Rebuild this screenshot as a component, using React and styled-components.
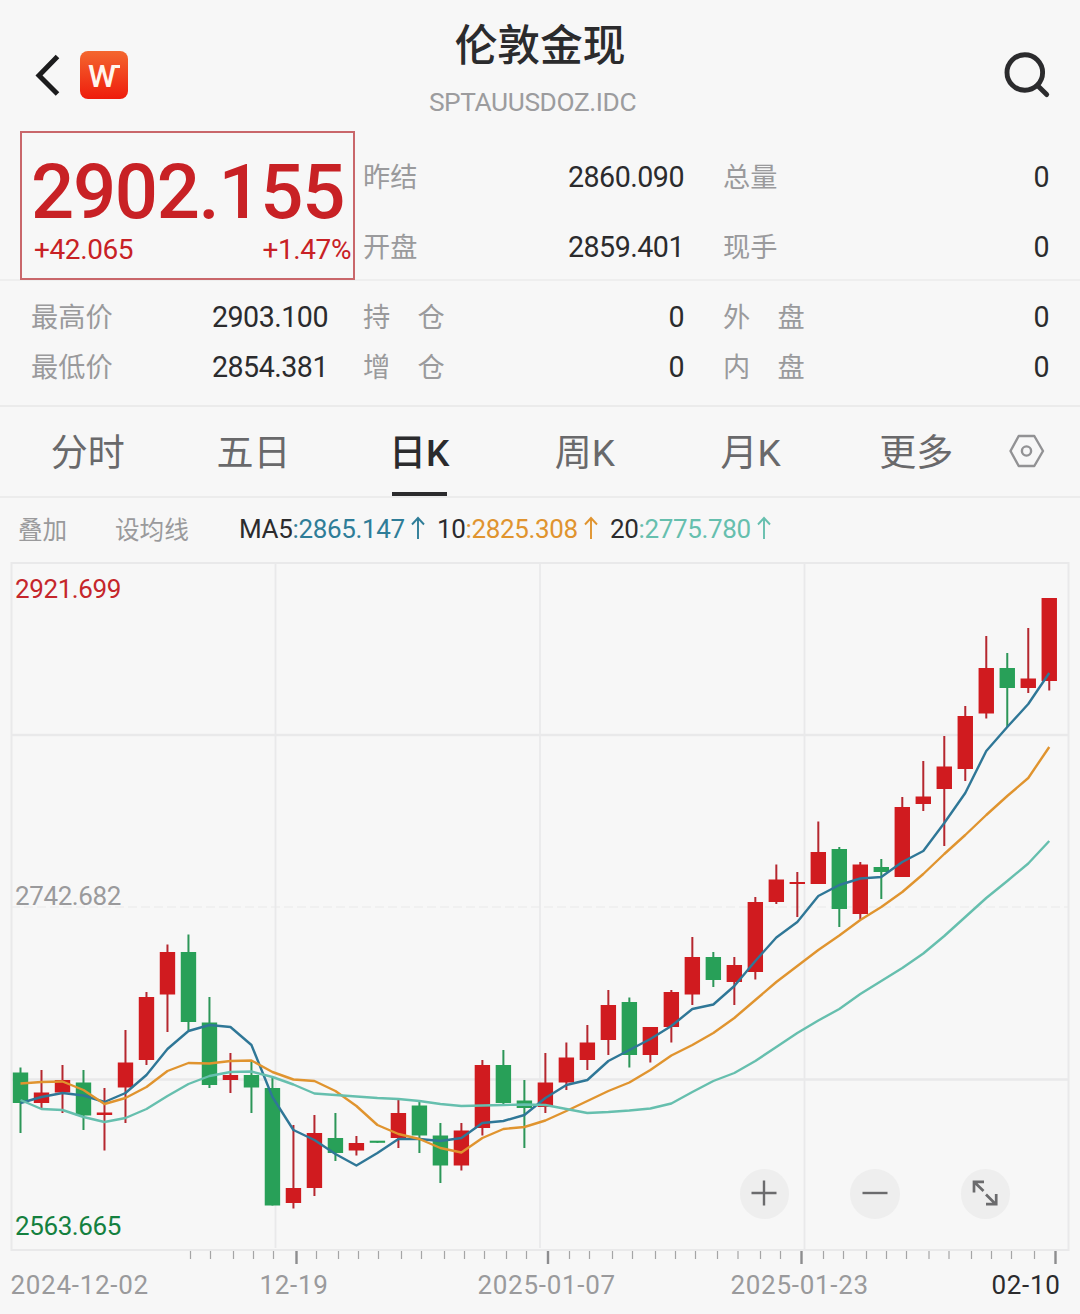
import React from 'react';
import styled, { createGlobalStyle } from 'styled-components';

const GlobalStyle = createGlobalStyle`
  * {
    box-sizing: border-box;
  }
  body {
    margin: 0;
    background: #f7f7f7;
  }
`

const Page = styled.div`
  width: 1080px;
  height: 1314px;
  overflow: hidden;
  background: #f7f7f7;
  color: #2b2b2d;
  font-family: Roboto, 'Noto Sans CJK SC', sans-serif;
`

const Header = styled.header`
  display: grid;
  grid-template-columns: 300px 1fr 300px;
  height: 131px;
`

const HeaderLeft = styled.div`
  display: flex;
  align-items: center;
  gap: 20px;
  padding: 0 0 0 34px;
  height: 150px;
`

const HeaderRight = styled.div`
  display: flex;
  align-items: center;
  justify-content: flex-end;
  padding-right: 28px;
  height: 150px;
`

const Logo = styled.div`
  display: flex;
  align-items: center;
  justify-content: center;
  position: relative;
  width: 48px;
  height: 48px;
  border-radius: 8px;
  background: linear-gradient(#f4672f, #ee1c0c);
  color: #fff6ee;
  font-size: 32px;
  font-weight: 500;
  line-height: 48px;
  padding: 1px 4px 0 0;

  &::after {
    content: '';
    position: absolute;
    top: 13.5px;
    right: 8px;
    width: 5px;
    height: 3.5px;
    background: #fff6ee;
  }
`

const TitleBlock = styled.div`
  display: flex;
  flex-direction: column;
  align-items: center;
`

const Title = styled.h1`
  margin: 16px 0 0;
  font-size: 42.7px;
  font-weight: 500;
  line-height: 60px;
`

const Code = styled.div`
  margin: 11px 15px 0 0;
  color: #9c9c9e;
  font-size: 26.3px;
  line-height: 30px;
  letter-spacing: -0.4px;
`

const Summary = styled.section`
  display: flex;
  height: 150px;
  border-bottom: 2px solid #eeeeee;
`

const PriceBox = styled.div`
  width: 335px;
  height: 149px;
  margin-left: 20px;
  padding: 14px 2px 0 9px;
  border: 2px solid #c9676b;
  color: #c82125;
`

const Price = styled.div`
  font-size: 76px;
  font-weight: 500;
  line-height: 90px;
  letter-spacing: -1.3px;
  white-space: nowrap;
`

const Change = styled.div`
  display: flex;
  justify-content: space-between;
  padding-left: 3px;
  font-size: 28px;
  line-height: 26px;
  letter-spacing: -0.4px;
`

const Quotes = styled.div`
  display: grid;
  grid-template-columns: 321px 326px;
  column-gap: 39px;
  grid-auto-rows: 70px;
  padding: 11px 0 0 8px;
`

const Quote = styled.div`
  display: flex;
  align-items: center;
  justify-content: space-between;
  white-space: pre;
`

const Details = styled.section`
  display: grid;
  grid-template-columns: 332px 360px 326px;
  grid-auto-rows: 50px;
  height: 126px;
  padding: 11px 0 0 31px;
  border-bottom: 2px solid #ebebeb;

  ${Quote}:nth-child(3n + 1) {
    padding-right: 35px;
  }
  ${Quote}:nth-child(3n + 2) {
    padding-right: 39px;
  }
`

const QuoteLabel = styled.span`
  padding-top: 1px;
  color: #9a9a9c;
  font-size: 27.2px;
  line-height: 40px;
`

const QuoteValue = styled.span`
  font-size: 28.6px;
  line-height: 40px;
  letter-spacing: -0.5px;
`

const Tabs = styled.nav`
  display: flex;
  height: 91px;
  padding-left: 5px;
  border-bottom: 2px solid #ececec;
`

const Tab = styled.div`
  display: flex;
  flex-direction: column;
  align-items: center;
  justify-content: space-between;
  width: 165.7px;
  padding-top: 20px;
  color: ${({ $active }) => ($active ? '#2b2b2d' : '#69696b')};
  font-size: 37px;
  font-weight: ${({ $active }) => ($active ? 500 : 400)};
  line-height: 54px;

  &::after {
    content: '';
    width: 55px;
    height: 4px;
    background: ${({ $active }) => ($active ? '#2b2b2d' : 'transparent')};
  }
`

const Settings = styled.div`
  display: flex;
  align-items: center;
  padding: 0 0 1px 10px;
`

const Averages = styled.div`
  display: flex;
  align-items: center;
  height: 62px;
  padding-left: 18px;
`

const Tool = styled.span`
  width: ${({ $width }) => $width}px;
  padding-bottom: 2px;
  color: #9a9a9c;
  font-size: 24.6px;
`

const Average = styled.div`
  display: flex;
  align-items: center;
  width: ${({ $width }) => $width}px;
  color: ${({ $color }) => $color};
  font-size: 26px;
  letter-spacing: -0.35px;

  b {
    color: #2b2b2d;
    font-weight: 400;
  }
  svg {
    margin: 0 0 2px 6px;
  }
`

const ChartArea = styled.div`
  position: relative;
  height: 709px;
`

const Scale = styled.span`
  position: absolute;
  left: 15px;
  top: ${({ $top }) => $top}px;
  color: ${({ $color }) => $color};
  font-size: 26px;
  line-height: 30px;
  letter-spacing: -0.4px;
`

const Controls = styled.div`
  position: absolute;
  left: 739.5px;
  top: 609px;
  display: flex;
  gap: 61px;
`

const RoundButton = styled.button`
  display: flex;
  align-items: center;
  justify-content: center;
  width: 49.5px;
  height: 49.5px;
  padding: 0 0 2px;
  border: 0;
  border-radius: 50%;
  background: #eeeeee;
`

const Dates = styled.div`
  display: flex;
  color: #9a9a9c;
  font-size: 26px;
  line-height: 32px;
  padding-left: 10.5px;
  letter-spacing: 0.7px;
`

const DateLabel = styled.span`
  width: ${({ $width }) => $width}px;
  color: ${({ $dark }) => ($dark ? '#2b2b2d' : 'inherit')};
  white-space: nowrap;
`

const RED = '#d01b1f';
const GREEN = '#28a058';
const TOP = 560;

// direction, high, body top, body bottom, low
const candles = [
  ['d', 1067.5, 1072.5, 1103, 1133],
  ['u', 1070, 1092.5, 1103, 1108],
  ['u', 1065, 1080, 1092.5, 1113],
  ['d', 1070, 1082.5, 1115.5, 1130],
  ['u', 1088, 1112.5, 1115, 1150.5],
  ['u', 1030, 1062.5, 1087.5, 1123],
  ['u', 992, 997, 1060, 1065],
  ['u', 944.5, 952, 994.5, 1032],
  ['d', 934.5, 952, 1022, 1030],
  ['d', 997, 1022.5, 1085, 1088],
  ['u', 1053, 1075, 1080, 1093],
  ['d', 1062, 1075, 1087.5, 1113],
  ['d', 1078, 1088, 1205.5, 1205.5],
  ['u', 1125, 1188, 1203, 1208.5],
  ['u', 1115, 1133, 1188, 1196],
  ['d', 1113, 1138, 1153, 1161],
  ['u', 1136, 1143, 1150.5, 1155.5],
  ['d', 1141, 1140.7, 1142.8, 1142.8],
  ['u', 1100, 1113, 1138, 1148],
  ['d', 1101, 1105.5, 1135.5, 1153],
  ['d', 1123, 1135.5, 1165.5, 1183],
  ['u', 1123, 1130.5, 1165.5, 1170.5],
  ['u', 1060, 1065, 1128, 1135.5],
  ['d', 1050, 1065, 1103, 1104],
  ['d', 1080, 1100.5, 1108, 1148],
  ['u', 1053, 1082.5, 1107, 1113],
  ['u', 1042.5, 1057.5, 1082.5, 1090],
  ['u', 1025, 1042.5, 1060, 1070],
  ['u', 990, 1005, 1040, 1055],
  ['d', 997.5, 1002, 1055, 1067.5],
  ['u', 1027, 1027, 1055, 1062.5],
  ['u', 990, 992, 1027, 1042.5],
  ['u', 937, 957, 994.5, 1005],
  ['d', 952, 957, 980, 987],
  ['u', 957, 965, 982, 1005],
  ['u', 897, 902, 972, 979.5],
  ['u', 864.5, 879.5, 902, 904],
  ['u', 872, 882, 884, 917],
  ['u', 821.5, 852, 884, 884],
  ['d', 847, 849, 909, 927],
  ['u', 862, 864.5, 914, 919.5],
  ['d', 859, 867, 872, 899],
  ['u', 797, 807, 877, 877],
  ['u', 761, 796.5, 804, 811],
  ['u', 736, 766.5, 789, 846],
  ['u', 706, 716, 769, 781],
  ['u', 636, 668, 713.5, 718.5],
  ['d', 653, 668, 688, 727],
  ['u', 628, 678.5, 688, 693],
  ['u', 598, 598, 681, 690.5],
];

const lines = [
  {
    color: '#2f7797',
    points: [1103, 1097, 1093, 1095.5, 1102, 1093, 1075, 1049, 1031, 1025, 1027, 1045, 1097, 1130, 1140, 1154, 1165.5, 1153, 1139, 1139, 1141, 1138, 1123, 1121, 1115, 1098, 1085, 1080, 1061, 1050, 1039, 1026, 1009, 1004.5, 986, 961, 937.5, 922, 896, 885, 878.5, 877, 862, 851, 823, 793, 751, 727, 704, 673],
  },
  {
    color: '#e0942f',
    points: [1083.5, 1082, 1081.5, 1090, 1104, 1098, 1087, 1071, 1063, 1063.5, 1061, 1060.5, 1072, 1079.5, 1081, 1091, 1106, 1125, 1134, 1139, 1148, 1152.5, 1138, 1129, 1127, 1120.5, 1111, 1101, 1091, 1082.5, 1070, 1055.5, 1045, 1033, 1018, 1000, 982, 966, 950, 935.5, 920, 907, 892, 874, 854, 835, 815, 796, 778, 747],
  },
  {
    color: '#66bfae',
    points: [1100, 1109, 1110, 1117, 1122, 1118, 1109, 1096, 1084, 1076, 1072, 1071.5, 1077, 1084.5, 1093.5, 1095, 1096.5, 1098, 1099, 1101, 1104, 1106, 1105.5, 1105, 1104.5, 1105, 1109, 1113, 1112, 1110.5, 1108.5, 1103.5, 1092, 1081, 1073, 1061, 1047, 1033, 1020.5, 1009, 994, 981, 968, 953.5, 936, 917, 898, 881, 863.5, 841],
  },
];

const ticks = [190.5, 210.5, 233.5, 253.5, 273.5, 316.5, 338.5, 358.5, 378.5, 401.5, 421.5, 444.5, 464.5, 484.5, 506.5, 526.5, 569.5, 589.5, 612.5, 632.5, 655.5, 675.5, 695.5, 717.5, 738, 760.5, 780.5, 823.5, 843.5, 866.5, 886.5, 906.5, 929, 949, 971.5, 991.5, 1011.5, 1034.5];
const majorTicks = [296.5, 548, 801.5, 1055.5];

const xAt = (i) => 20.5 + i * 20.995;

const Chart = () => (
  <svg width="1080" height="706" viewBox={`0 ${TOP} 1080 706`}>
    <g stroke="#e9e9ea" strokeWidth="2" fill="none">
      <rect x="11.5" y="563" width="1057" height="687" />
      <path d="M275.5 563V1248M540 563V1248M804.5 563V1250" strokeWidth="1.8" />
      <path d="M11 735H1069M11 1079.5H1069" strokeWidth="2.6" />
      <path d="M11 907H1069" strokeWidth="1.2" strokeDasharray="9 4" />
    </g>
    <g stroke="#a5a5a6" strokeWidth="1.2">
      {ticks.map((x) => (
        <line key={x} x1={x} x2={x} y1="1251" y2="1259" />
      ))}
    </g>
    <g stroke="#8d8d8f" strokeWidth="2.4">
      {majorTicks.map((x) => (
        <line key={x} x1={x} x2={x} y1="1251" y2="1264" />
      ))}
    </g>
    {candles.map(([dir, high, top, bottom, low], i) => (
      <g key={i} fill={dir === 'u' ? RED : GREEN}>
        <rect x={xAt(i) - 1} y={high} width="2" height={low - high} fill={dir === 'u' ? '#b5272f' : '#2c9658'} />
        <rect x={xAt(i) - 7.7} y={top} width="15.4" height={bottom - top} />
      </g>
    ))}
    {lines.map(({ color, points }) => (
      <polyline
        key={color}
        points={points.map((y, i) => `${xAt(i)},${y}`).join(' ')}
        fill="none"
        stroke={color}
        strokeWidth="2.4"
        strokeLinejoin="round"
      />
    ))}
  </svg>
);

const UpArrow = () => (
  <svg width="14" height="24" viewBox="0 0 14 24" fill="none" stroke="currentColor" strokeWidth="1.9">
    <path d="M7 23V2M1 8.5L7 2L13 8.5" />
  </svg>
);

const Item = ({ label, value }) => (
  <Quote>
    <QuoteLabel>{label}</QuoteLabel>
    <QuoteValue>{value}</QuoteValue>
  </Quote>
);

const App = () => {
  return (
    <Page>
      <GlobalStyle />
      <Header>
        <HeaderLeft>
          <svg width="26" height="42" viewBox="0 0 26 42" fill="none" stroke="#1c1c1d" strokeWidth="5">
            <path d="M23.5 2.5L5 21.5L23.5 40" />
          </svg>
          <Logo>W</Logo>
        </HeaderLeft>
        <TitleBlock>
          <Title>伦敦金现</Title>
          <Code>SPTAUUSDOZ.IDC</Code>
        </TitleBlock>
        <HeaderRight>
          <svg width="50" height="50" viewBox="0 0 50 50" fill="none" stroke="#2b2b2d" strokeWidth="4.9" strokeLinecap="round">
            <circle cx="22.8" cy="22.5" r="17.8" />
            <path d="M36 36L44.7 44.6" />
          </svg>
        </HeaderRight>
      </Header>

      <Summary>
        <PriceBox>
          <Price>2902.155</Price>
          <Change>
            <span>+42.065</span>
            <span>+1.47%</span>
          </Change>
        </PriceBox>
        <Quotes>
          <Item label="昨结" value="2860.090" />
          <Item label="总量" value="0" />
          <Item label="开盘" value="2859.401" />
          <Item label="现手" value="0" />
        </Quotes>
      </Summary>

      <Details>
        <Item label="最高价" value="2903.100" />
        <Item label="持　仓" value="0" />
        <Item label="外　盘" value="0" />
        <Item label="最低价" value="2854.381" />
        <Item label="增　仓" value="0" />
        <Item label="内　盘" value="0" />
      </Details>

      <Tabs>
        <Tab>分时</Tab>
        <Tab>五日</Tab>
        <Tab $active>日K</Tab>
        <Tab>周K</Tab>
        <Tab>月K</Tab>
        <Tab>更多</Tab>
        <Settings>
          <svg width="36" height="34" viewBox="0 0 36 34" fill="none" stroke="#929294" strokeWidth="2.4">
            <path d="M9.7 2H25.3L34 17L25.3 32H9.7L1.5 17Z" strokeLinejoin="round" />
            <circle cx="17.5" cy="17" r="4.6" />
          </svg>
        </Settings>
      </Tabs>

      <Averages>
        <Tool $width={97}>叠加</Tool>
        <Tool $width={124}>设均线</Tool>
        <Average $width={198} $color="#2f7d98">
          <b>MA5</b>:2865.147
          <UpArrow />
        </Average>
        <Average $width={173} $color="#e0942f">
          <b>10</b>:2825.308
          <UpArrow />
        </Average>
        <Average $width={173} $color="#66bfae">
          <b>20</b>:2775.780
          <UpArrow />
        </Average>
      </Averages>

      <ChartArea>
        <Chart />
        <Scale $top={14} $color="#c5262b">2921.699</Scale>
        <Scale $top={321} $color="#9a9a9c">2742.682</Scale>
        <Scale $top={651} $color="#14803f">2563.665</Scale>
        <Controls>
          <RoundButton>
            <svg width="26" height="26" viewBox="0 0 26 26" stroke="#6b6b6d" strokeWidth="2.4">
              <path d="M0.5 13H25.5M13 0.5V25.5" />
            </svg>
          </RoundButton>
          <RoundButton>
            <svg width="26" height="26" viewBox="0 0 26 26" stroke="#6b6b6d" strokeWidth="2.4">
              <path d="M0.5 13H25.5" />
            </svg>
          </RoundButton>
          <RoundButton>
            <svg width="26" height="26" viewBox="0 0 26 26" fill="none" stroke="#6b6b6d" strokeWidth="2.7">
              <path d="M12 1.8H2V12.5M2.5 2.3L11.5 11M14 14.5L23.5 24M14 24.2H24.2V14" />
            </svg>
          </RoundButton>
        </Controls>
      </ChartArea>

      <Dates>
        <DateLabel $width={249}>2024-12-02</DateLabel>
        <DateLabel $width={218}>12-19</DateLabel>
        <DateLabel $width={253}>2025-01-07</DateLabel>
        <DateLabel $width={261}>2025-01-23</DateLabel>
        <DateLabel $width={80} $dark>02-10</DateLabel>
      </Dates>
    </Page>
  );
}

export default App;
